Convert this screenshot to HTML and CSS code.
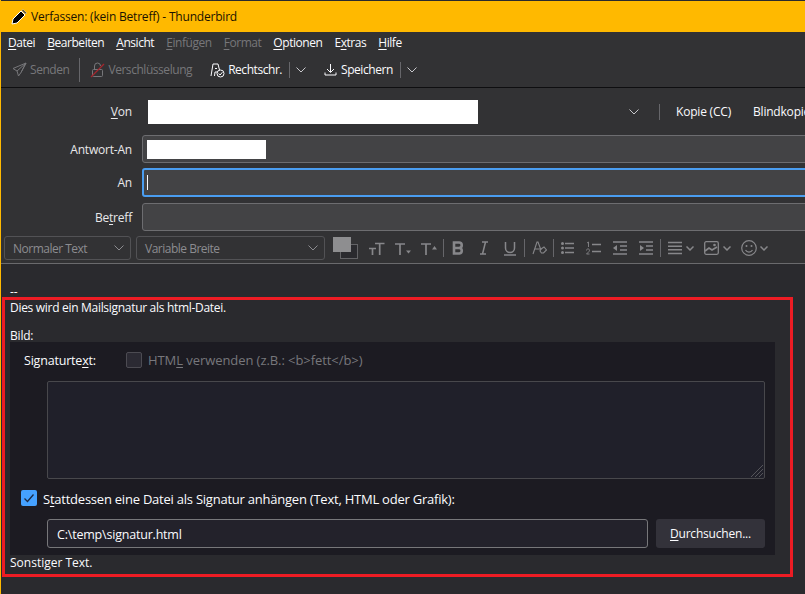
FILE: index.html
```html
<!DOCTYPE html>
<html lang="de">
<head>
  <meta charset="UTF-8" />
  <title>Verfassen: (kein Betreff) - Thunderbird</title>
  <link rel="stylesheet" href="styles.css">
</head>
<body>
  <div class="window">
    <div class="titlebar">
      <svg class="pen" width="16" height="16" viewBox="0 0 16 16"><path d="M1 15l1-5 8-8 4 4-8 8z" fill="#000" stroke="#fff" stroke-width="1"/><path d="M11 1.500l1-1 3.500 3.500-1 1z" fill="#000" stroke="#fff" stroke-width=".6"/></svg>
      <span>Verfassen: (kein Betreff) - Thunderbird</span>
    </div>

    <div class="menubar">
      <span><u>D</u>atei</span>
      <span><u>B</u>earbeiten</span>
      <span><u>A</u>nsicht</span>
      <span class="off"><u>E</u>infügen</span>
      <span class="off"><u>F</u>ormat</span>
      <span><u>O</u>ptionen</span>
      <span>E<u>x</u>tras</span>
      <span><u>H</u>ilfe</span>
    </div>

    <div class="toolbar">
      <div class="tool off send">
        <svg width="15" height="15" viewBox="0 0 15 15" fill="none" stroke="currentColor"><path d="M14 1L1 6.500l4 2.500 1.500 5 2.500-3.500zM14 1L5 9M14 1L9 10.500"/></svg>
        <span>Senden</span>
      </div>
      <i class="sep tall sep-send"></i>
      <div class="tool off crypt">
        <svg width="15" height="16" viewBox="0 0 15 16" fill="none" stroke="currentColor"><rect x="2.500" y="7.500" width="10" height="7" rx="1"/><path d="M4.500 7.500V4a3 3 0 0 1 6 0"/><path d="M1 15L14 2" stroke="#a5262d" stroke-width="1.200"/></svg>
        <span>Verschlüsselung</span>
      </div>
      <div class="tool spell">
        <svg width="15" height="16" viewBox="0 0 15 16" fill="none" stroke="currentColor"><path d="M1 14L3 2h5l1.500 6M4.500 14L5 10h2.500"/><path d="M5 6.500h2"/><circle cx="10.500" cy="11.500" r="3.500" fill="#323234"/><path d="M8.700 11.500l1.400 1.500 2.300-2.800"/></svg>
        <span>Rechtschr.</span>
      </div>
      <i class="sep"></i>
      <svg class="chev tool-chev" width="10" height="6" viewBox="0 0 10 6"><path d="M.5.500L5 5 9.500.500"/></svg>
      <div class="tool save">
        <svg width="13" height="13" viewBox="0 0 13 13" fill="none" stroke="currentColor"><path d="M6.500 1v8M3 6l3.500 3.500L10 6M1 9.500v2.500h11V9.500"/></svg>
        <span>Speichern</span>
      </div>
      <i class="sep"></i>
      <svg class="chev tool-chev" width="10" height="6" viewBox="0 0 10 6"><path d="M.5.500L5 5 9.500.500"/></svg>
    </div>

    <div class="headers">
      <div class="row from-row">
        <label><u>V</u>on</label>
        <div class="from-value"></div>
        <svg class="chev from-chev" width="10" height="6" viewBox="0 0 10 6"><path d="M.5.500L5 5 9.500.500"/></svg>
        <i class="sep from-sep"></i>
        <span class="recip cc">Kopie (CC)</span>
        <span class="recip">Blindkopie (BCC)</span>
      </div>
      <div class="row reply-row">
        <label>Antwort-An</label>
        <div class="field"><div class="redacted"></div></div>
      </div>
      <div class="row to-row">
        <label>An</label>
        <div class="field focus"><i class="caret"></i></div>
      </div>
      <div class="row subject-row">
        <label>Be<u>t</u>reff</label>
        <div class="field"></div>
      </div>
    </div>

    <div class="formatbar">
      <div class="select para">Normaler Text<svg class="chev" width="10" height="6" viewBox="0 0 10 6"><path d="M.5.500L5 5 9.500.500"/></svg></div>
      <div class="select font">Variable Breite<svg class="chev" width="10" height="6" viewBox="0 0 10 6"><path d="M.5.500L5 5 9.500.500"/></svg></div>
      <div class="colors"><i class="fg"></i><i class="bg"></i></div>
      <div class="ficons">
        <svg class="fi first" width="16" height="16" viewBox="0 0 16 16"><path d="M0 8.500h7M3.500 8.500V15M6 3.500h9.500M10.700 3.500V15"/></svg>
        <svg class="fi" width="16" height="16" viewBox="0 0 16 16"><path d="M0 4h10M5 4v11"/><path class="solid" d="M11 10.500h5l-2.500 3z"/></svg>
        <svg class="fi" width="16" height="16" viewBox="0 0 16 16"><path d="M0 4h10M5 4v11"/><path class="solid" d="M11 9.500h5L13.500 6z"/></svg>
        <i class="sep fsep"></i>
        <svg class="fi b" width="12" height="14" viewBox="0 0 12 14"><path d="M2 1.500h5a2.700 2.700 0 0 1 0 5.500H2zM2 7h5.500a2.800 2.800 0 0 1 0 5.500H2z" stroke-width="2.600"/></svg>
        <svg class="fi i" width="8" height="14" viewBox="0 0 8 14"><path d="M2 1h6M0 13h6M5.500 1L2.500 13" stroke-width="1.500"/></svg>
        <svg class="fi u" width="12" height="15" viewBox="0 0 12 15"><path d="M1.500 1v6a4.500 4.500 0 0 0 9 0V1M0 14h12" stroke-width="1.500"/></svg>
        <i class="sep fsep"></i>
        <svg class="fi a" width="15" height="16" viewBox="0 0 15 16"><path d="M1 14L5 2h1l3 8M3 9h5"/><path d="M9 9l3-2 2.500 3-3 3H9.500L8 11z"/></svg>
        <i class="sep fsep"></i>
        <svg class="fi bul" width="13" height="14" viewBox="0 0 13 14"><path d="M4 2.500h9M4 7h9M4 11.500h9" stroke-width="1.500"/><circle class="solid" cx="1.500" cy="2.500" r="1.500"/><circle class="solid" cx="1.500" cy="7" r="1.500"/><circle class="solid" cx="1.500" cy="11.500" r="1.500"/></svg>
        <svg class="fi num" width="15" height="14" viewBox="0 0 15 14"><path d="M6 3.500h9M6 10.500h9" stroke-width="1.500"/><path d="M1 2l1.500-1v5M.5 9.500a1.500 1.500 0 1 1 2.500 1L.5 13H3.500" stroke-width=".9"/></svg>
        <svg class="fi outd" width="14" height="14" viewBox="0 0 14 14"><path d="M0 1h14M7 5h7M7 9h7M0 13h14" stroke-width="1.500"/><path class="solid" d="M0 7l4-3v6z"/></svg>
        <svg class="fi ind" width="14" height="14" viewBox="0 0 14 14"><path d="M0 1h14M7 5h7M7 9h7M0 13h14" stroke-width="1.500"/><path class="solid" d="M5 7L1 4v6z"/></svg>
        <i class="sep fsep"></i>
        <svg class="fi align" width="14" height="14" viewBox="0 0 14 14"><path d="M0 1.500h14M0 5.200h14M0 8.800h14M0 12.500h14" stroke-width="1.400"/></svg>
        <svg class="fi dn" width="8" height="5" viewBox="0 0 8 5"><path d="M.5.500L4 4 7.500.500" stroke-width="1.500"/></svg>
        <svg class="fi img" width="15" height="14" viewBox="0 0 15 14"><rect x=".7" y=".7" width="13.600" height="12.600" rx="1.500" stroke-width="1.300"/><path d="M1 10l4-3 3 2 5-3"/><circle class="solid" cx="10.500" cy="4" r="1.300"/></svg>
        <svg class="fi dn" width="8" height="5" viewBox="0 0 8 5"><path d="M.5.500L4 4 7.500.500" stroke-width="1.500"/></svg>
        <svg class="fi smile" width="16" height="16" viewBox="0 0 16 16"><circle cx="8" cy="8" r="7.300" stroke-width="1.200"/><circle class="solid" cx="5.500" cy="6" r="1"/><circle class="solid" cx="10.500" cy="6" r="1"/><path d="M4.500 10a4 4 0 0 0 7 0" stroke-width="1.200"/></svg>
        <svg class="fi dn last" width="8" height="5" viewBox="0 0 8 5"><path d="M.5.500L4 4 7.500.500" stroke-width="1.500"/></svg>
      </div>
    </div>

    <div class="editor">
      <div class="dashes">--</div>
      <p class="intro">Dies wird ein Mailsignatur als html-Datei.</p>
      <p class="bild">Bild:</p>
      <div class="prefs">
        <div class="sig-head">
          <span class="sig-label">Signaturte<u>x</u>t:</span>
          <i class="check"></i>
          <span class="check-label">HTM<u>L</u> verwenden (z.B.: &lt;b&gt;fett&lt;/b&gt;)</span>
        </div>
        <div class="textarea">
          <svg class="grip" width="14" height="14" viewBox="0 0 14 14"><path d="M1 13L13 1M5 13l8-8M9 13l4-4"/></svg>
        </div>
        <div class="attach">
          <i class="check on"><svg width="16" height="16" viewBox="0 0 16 16"><path d="M3.500 8.500l3 3 6-7" fill="none" stroke="#1c2a44" stroke-width="1.300"/></svg></i>
          <span>S<u>t</u>attdessen eine Datei als Signatur anhängen (Text, HTML oder Grafik):</span>
        </div>
        <div class="file-row">
          <div class="file-input">C:\temp\signatur.html</div>
          <div class="browse"><u>D</u>urchsuchen...</div>
        </div>
      </div>
      <p class="after">Sonstiger Text.</p>
    </div>

    <div class="redbox"></div>
  </div>
</body>
</html>
```

FILE: styles.css
```css
html, body {
  margin: 0;
  height: 100%;
  overflow: hidden;
}
body {
  font-family: "Open Sans", "Noto Sans", sans-serif;
  font-size: 12px;
  letter-spacing: -0.2px;
  color: #fbfbfe;
  background: #2a2a2e;
}
p {
  margin: 0;
}
u {
  text-underline-offset: 2px;
}
.window {
  position: relative;
  width: 805px;
  height: 594px;
  box-sizing: border-box;
  padding-top: 1px;
  border-left: 1px solid #ffb900;
  overflow: hidden;
}
.titlebar {
  display: flex;
  align-items: center;
  gap: 4px;
  height: 31px;
  margin-left: -1px;
  padding-left: 11px;
  background: #ffb900;
  color: #1a1200;
}
.menubar {
  display: flex;
  align-items: center;
  gap: 12px;
  height: 20px;
  padding-left: 7px;
  background: #323234;
  letter-spacing: -0.45px;
}
.off {
  color: #77777a;
}
.toolbar {
  display: flex;
  align-items: center;
  height: 36px;
  background: #323234;
  border-bottom: 1px solid #0e0e10;
  box-sizing: border-box;
  padding-left: 11px;
  letter-spacing: -0.45px;
}
.tool {
  display: flex;
  align-items: center;
  gap: 3px;
}
.sep {
  display: block;
  flex: none;
  width: 1px;
  height: 16px;
  background: #66666a;
}
.sep.tall {
  height: 24px;
}
.sep-send {
  margin: 0 10px;
}
.spell {
  margin-left: 18px;
}
.spell + .sep {
  margin-left: 7px;
}
.save {
  margin-left: 18px;
  gap: 4px;
}
.save + .sep {
  margin-left: 7px;
}
.chev {
  fill: none;
  stroke: #c8c8cc;
  stroke-width: 1;
  flex: none;
}
.tool-chev {
  margin-left: 6px;
}
.headers {
  height: 144px;
  box-sizing: border-box;
  padding-top: 11px;
  background: #323234;
}
.row {
  display: flex;
  align-items: center;
}
.row label {
  flex: none;
  width: 131px;
  text-align: right;
  color: #e8e8ea;
}
.from-row {
  height: 25px;
}
.from-value {
  flex: none;
  width: 330px;
  height: 24px;
  margin-left: 16px;
  background: #fff;
}
.from-chev {
  margin-left: 151px;
}
.from-sep {
  margin-left: 20px;
}
.recip {
  flex: none;
  white-space: nowrap;
}
.cc {
  margin-left: 16px;
  margin-right: 22px;
}
.reply-row {
  margin-top: 11px;
}
.to-row {
  margin-top: 5px;
}
.subject-row {
  margin-top: 6px;
}
.field {
  flex: none;
  width: 700px;
  height: 28px;
  margin-left: 10px;
  box-sizing: border-box;
  display: flex;
  align-items: center;
  padding-left: 4px;
  background: #434345;
  border: 1px solid #6d6d70;
  border-radius: 3px;
}
.field.focus {
  height: 29px;
  border: 2px solid #4a9df0;
  padding-left: 3px;
}
.redacted {
  width: 119px;
  height: 19px;
  background: #fff;
}
.caret {
  display: block;
  width: 1px;
  height: 15px;
  background: #fbfbfe;
}
.formatbar {
  display: flex;
  align-items: flex-start;
  height: 32px;
  box-sizing: border-box;
  padding: 4px 0 0 3px;
  background: #323234;
  border-bottom: 1px solid #6a6a6d;
}
.select {
  display: flex;
  align-items: center;
  justify-content: space-between;
  height: 24px;
  box-sizing: border-box;
  padding: 0 6px 0 8px;
  margin-right: 5px;
  color: #8c8c90;
  border: 1px solid #525255;
  border-radius: 3px;
  letter-spacing: -0.5px;
}
.select .chev {
  stroke: #8c8c90;
}
.para {
  width: 127px;
}
.font {
  width: 189px;
}
.colors {
  position: relative;
  flex: none;
  width: 25px;
  height: 22px;
  margin: 1px 0 0 3px;
}
.colors i {
  position: absolute;
  display: block;
  box-sizing: border-box;
  width: 18px;
  height: 15px;
}
.colors .bg {
  left: 7px;
  top: 7px;
  background: #2a2a2e;
  border: 1px solid #636366;
}
.colors .fg {
  left: 0;
  top: 0;
  background: #8e8e90;
  z-index: 1;
}
.ficons {
  display: flex;
  align-items: center;
  height: 24px;
  margin-left: 11px;
}
.fi {
  flex: none;
  fill: none;
  stroke: #87878a;
  stroke-width: 1.700;
  margin-left: 10px;
}
.fi.first {
  margin-left: 0;
}
.fi .solid {
  fill: #87878a;
  stroke: none;
}
.fsep {
  height: 18px;
  margin-left: 6px;
}
.u + .fsep {
  margin-left: 8px;
}
.ind + .fsep {
  margin-left: 7px;
}
.fsep + .fi {
  margin-left: 7px;
}
.fsep + .b {
  margin-left: 8px;
}
.a {
  stroke-width: 1.100;
}
.i, .u {
  margin-left: 16px;
}
.num, .outd, .ind {
  margin-left: 12px;
}
.dn {
  margin-left: 4px;
}
.dn.last {
  margin-left: 3px;
}
.img, .smile {
  margin-left: 10px;
}
.editor {
  box-sizing: border-box;
  height: 330px;
  padding: 0 0 0 9px;
  background: #2a2a2e;
}
.dashes {
  height: 35px;
  padding-top: 20px;
  box-sizing: border-box;
  line-height: 15px;
}
.intro {
  line-height: 17px;
  height: 17px;
  letter-spacing: -0.3px;
}
.bild {
  margin-top: 11px;
  line-height: 17px;
  height: 17px;
}
.prefs {
  box-sizing: border-box;
  width: 765px;
  height: 213px;
  margin-top: -2px;
  padding: 10px 10px 7px 11px;
  background: #1c1b22;
  font-size: 13px;
}
.sig-head {
  display: flex;
  align-items: center;
  height: 16px;
  padding-left: 3px;
}
.sig-label {
  width: 102px;
  font-size: 12.500px;
}
.check {
  display: block;
  flex: none;
  box-sizing: border-box;
  width: 16px;
  height: 16px;
  background: #2b2a33;
  border: 1px solid #4c4b52;
  border-radius: 2px;
}
.check.on {
  background: #45a1ff;
  border: 0;
}
.check.on svg {
  display: block;
}
.check-label {
  margin-left: 6px;
  color: #77777c;
  letter-spacing: -0.07px;
}
.textarea {
  position: relative;
  box-sizing: border-box;
  width: 718px;
  height: 98px;
  margin: 13px 0 0 26px;
  background: #20202a;
  border: 1px solid #48484c;
  border-radius: 2px;
}
.grip {
  position: absolute;
  right: 0;
  bottom: 0;
  fill: none;
  stroke: #55555a;
}
.attach {
  display: flex;
  align-items: center;
  gap: 6px;
  height: 16px;
  margin-top: 11px;
  letter-spacing: -0.23px;
}
.attach span {
  padding-top: 2px;
}
.file-row {
  display: flex;
  gap: 8px;
  margin: 13px 0 0 26px;
}
.file-input {
  box-sizing: border-box;
  display: flex;
  align-items: center;
  width: 601px;
  height: 29px;
  padding: 2px 0 0 9px;
  font-size: 12.500px;
  background: #23222b;
  border: 1px solid #77777a;
  border-radius: 3px;
}
.browse {
  box-sizing: border-box;
  display: flex;
  align-items: center;
  justify-content: center;
  width: 109px;
  height: 29px;
  font-size: 12px;
  background: #33323a;
  border-radius: 3px;
}
.after {
  line-height: 17px;
  margin-top: -1px;
  letter-spacing: 0;
}
.redbox {
  position: absolute;
  left: 1px;
  top: 297px;
  width: 791px;
  height: 280px;
  box-sizing: border-box;
  border: 3px solid #ed1c24;
}
```
